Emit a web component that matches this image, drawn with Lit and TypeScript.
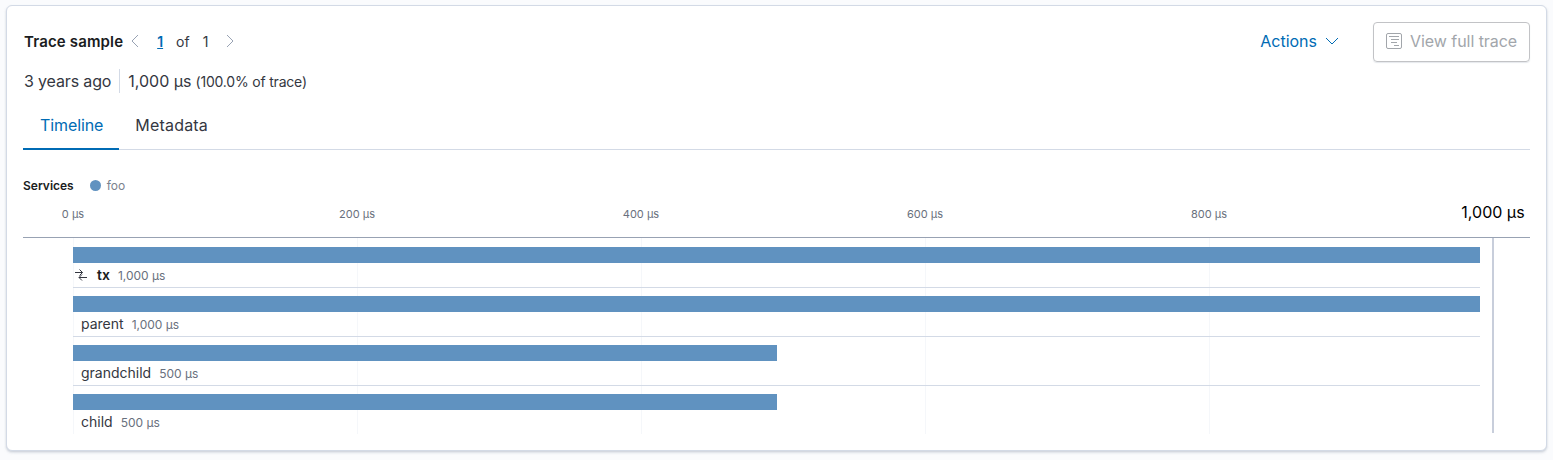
import { LitElement, html, css } from 'lit';
import { customElement } from 'lit/decorators.js';

const TICKS = [0, 200, 400, 600, 800];
const SCALE = 284 / 200;

const ROWS = [
  { name: 'tx', duration: 1000, label: '1,000 μs', root: true },
  { name: 'parent', duration: 1000, label: '1,000 μs', root: false },
  { name: 'grandchild', duration: 500, label: '500 μs', root: false },
  { name: 'child', duration: 500, label: '500 μs', root: false },
];

@customElement('app-root')
export class AppRoot extends LitElement {
  static styles = css`
    :host {
      display: block;
      height: 460px;
      box-sizing: border-box;
      padding: 5px 6px 0 6px;
      background: #fafbfd;
      font-family: Inter, 'Liberation Sans', sans-serif;
      color: #343741;
      font-size: 14px;
    }
    .card {
      box-sizing: border-box;
      height: 446px;
      padding: 16px;
      background: #fff;
      border: 1px solid #d3dae6;
      border-radius: 6px;
      box-shadow: 0 1px 2px rgba(152, 162, 179, 0.35), 0 2px 3px rgba(152, 162, 179, 0.2);
    }
    .head {
      display: flex;
      align-items: center;
      height: 40px;
    }
    .title {
      font-size: 15px;
      font-weight: 600;
      letter-spacing: 0.15px;
      color: #1a1c21;
      padding-bottom: 2px;
      margin-left: 1px;
    }
    .pager {
      display: flex;
      align-items: center;
      margin-left: 4px;
      padding-bottom: 2px;
      font-size: 14px;
    }
    .pager svg {
      display: block;
      color: #98a2b3;
    }
    .current {
      margin-left: 14px;
      color: #006bb4;
      font-weight: 600;
      text-decoration: underline;
    }
    .of {
      margin-left: 13px;
    }
    .total {
      margin-left: 13px;
      margin-right: 14px;
    }
    .spacer {
      flex: 1;
    }
    .actions {
      display: flex;
      align-items: center;
      gap: 7px;
      margin-right: 33px;
      padding-bottom: 2px;
      font-size: 16px;
      color: #006bb4;
    }
    .view {
      box-sizing: border-box;
      display: flex;
      align-items: center;
      gap: 8px;
      width: 157px;
      height: 40px;
      padding: 0 0 2px 12px;
      border: 1px solid #c2c3c6;
      border-radius: 4px;
      font-size: 16px;
      letter-spacing: -0.05px;
      color: #a2a6ab;
      box-shadow: 0 1px 1px rgba(152, 162, 179, 0.25);
    }
    .meta {
      display: flex;
      align-items: center;
      height: 24px;
      margin-top: 7px;
      font-size: 16px;
    }
    .meta .age {
      padding-right: 8px;
      border-right: 1px solid #d3dae6;
      line-height: 24px;
      letter-spacing: -0.15px;
      margin-left: 1px;
    }
    .meta .dur {
      margin-left: 8px;
    }
    .meta small {
      margin-left: 4px;
      font-size: 14px;
      letter-spacing: -0.2px;
    }
    .tabs {
      display: flex;
      height: 44px;
      margin-top: 12px;
      border-bottom: 1px solid #d3dae6;
      font-size: 16px;
    }
    .tab {
      padding: 0 16px;
      line-height: 40px;
      letter-spacing: 0.2px;
    }
    .tab.on {
      padding-left: 17px;
      color: #006bb4;
      letter-spacing: -0.1px;
      box-shadow: inset 0 -2px 0 #006bb4;
      margin-bottom: -1px;
    }
    .legend {
      display: flex;
      align-items: center;
      height: 18px;
      margin-top: 26px;
      font-size: 12px;
      color: #7b828e;
    }
    .legend b {
      font-weight: 600;
      color: #1a1c21;
    }
    .dot {
      width: 11px;
      height: 11px;
      margin: 0 6px 0 16px;
      border-radius: 50%;
      background: #6092c0;
    }
    .chart {
      position: relative;
    }
    .axis {
      position: relative;
      height: 43px;
      border-bottom: 1px solid #98a2b3;
    }
    .tick {
      position: absolute;
      top: 12px;
      transform: translateX(-50%);
      font-size: 11px;
      line-height: 16px;
      white-space: nowrap;
      color: #69707d;
    }
    .tick.end {
      top: 8px;
      font-size: 16px;
      line-height: 20px;
      color: #000;
    }
    .grid {
      position: absolute;
      top: 44px;
      width: 1px;
      height: 196px;
      background: #f5f7fa;
    }
    .marker {
      position: absolute;
      top: 44px;
      left: 1469px;
      width: 2px;
      height: 195px;
      background: #c8cedb;
    }
    .rows {
      position: relative;
      width: 1407px;
      margin-left: 50px;
      padding-top: 1px;
    }
    .row {
      box-sizing: border-box;
      height: 49px;
      padding-top: 8px;
      border-bottom: 1px solid #d3dae6;
    }
    .row:last-child {
      border-bottom: none;
    }
    .bar {
      height: 16px;
      background: #6092c0;
    }
    .label {
      display: flex;
      align-items: baseline;
      height: 23px;
      padding-left: 8px;
      line-height: 23px;
    }
    .label.root {
      padding-left: 2px;
      font-weight: 600;
      color: #1a1c21;
    }
    .label svg {
      align-self: center;
      margin-right: 10px;
    }
    .label span {
      margin-left: 8px;
      font-size: 12px;
      font-weight: 400;
      color: #69707d;
    }
  `;

  render() {
    return html`
      <div class="card">
        <div class="head">
          <div class="title">Trace sample</div>
          <div class="pager">
            <svg width="16" height="16" viewBox="0 0 16 16" fill="none" stroke="currentColor">
              <path d="M11 2 L5 8 L11 14" />
            </svg>
            <span class="current">1</span>
            <span class="of">of</span>
            <span class="total">1</span>
            <svg width="16" height="16" viewBox="0 0 16 16" fill="none" stroke="currentColor">
              <path d="M5 2 L11 8 L5 14" />
            </svg>
          </div>
          <div class="spacer"></div>
          <div class="actions">
            Actions
            <svg width="16" height="16" viewBox="0 0 16 16" fill="none" stroke="currentColor">
              <path d="M2 5 L8 11 L14 5" />
            </svg>
          </div>
          <div class="view">
            <svg width="16" height="16" viewBox="0 0 16 16" fill="none" stroke="currentColor">
              <rect x="0.5" y="0.5" width="15" height="15" rx="1.5" />
              <path d="M3 3.5 H13 M5 6.5 H13 M5 9.5 H11 M8 12.5 H13" />
            </svg>
            View full trace
          </div>
        </div>
        <div class="meta">
          <div class="age">3 years ago</div>
          <div class="dur">1,000 μs</div>
          <small>(100.0% of trace)</small>
        </div>
        <div class="tabs">
          <div class="tab on">Timeline</div>
          <div class="tab">Metadata</div>
        </div>
        <div class="legend">
          <b>Services</b>
          <div class="dot"></div>
          foo
        </div>
        <div class="chart">
          <div class="axis">
            ${TICKS.map(
              (t) => html`<div class="tick" style="left:${50 + t * SCALE}px">${t} μs</div>`
            )}
            <div class="tick end" style="left:1470px">1,000 μs</div>
          </div>
          ${TICKS.map((t) => html`<div class="grid" style="left:${50 + t * SCALE}px"></div>`)}
          <div class="marker"></div>
          <div class="rows">
            ${ROWS.map(
              (r) => html`
                <div class="row">
                  <div class="bar" style="width:${r.duration / 10}%"></div>
                  <div class="label ${r.root ? 'root' : ''}">
                    ${r.root
                      ? html`<svg width="12" height="12" viewBox="0 0 12 12" fill="none" stroke="#343741">
                          <path d="M0 3.5 H7.5 M4.5 0.5 L7.5 3.5 L4.5 6.5" />
                          <path d="M12 8.5 H4 M7 5.5 L4 8.5 L7 11.5" />
                        </svg>`
                      : ''}
                    ${r.name}
                    <span>${r.label}</span>
                  </div>
                </div>
              `
            )}
          </div>
        </div>
      </div>
    `;
  }
}
